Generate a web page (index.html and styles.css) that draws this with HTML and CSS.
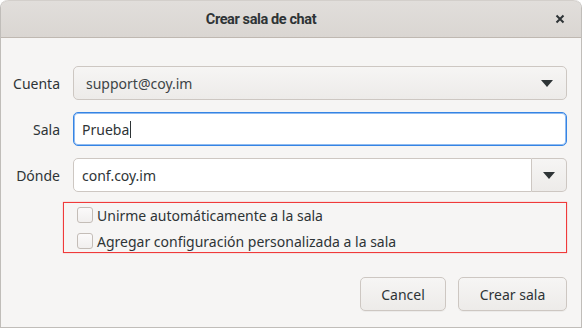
FILE: index.html
```html
<!DOCTYPE html>
<html lang="es">

<head>
    <meta charset="utf-8" />
    <title>Crear sala de chat</title>
    <link rel="stylesheet" href="styles.css">
</head>

<body>
    <div class="window">
        <div class="titlebar">
            <h1>Crear sala de chat</h1>
            <span class="closeButton">
                <svg width="10" height="10" viewBox="0 0 10 10">
                    <path d="M1.5 1.5 L8.5 8.5 M8.5 1.5 L1.5 8.5" stroke="#2e3436" stroke-width="2" />
                </svg>
            </span>
        </div>
        <div class="content">
            <!-- Champs du formulaire -->
            <div class="formGrid">
                <label>Cuenta</label>
                <div class="combo">
                    <span>support@coy.im</span>
                    <svg class="arrow" width="12" height="7" viewBox="0 0 12 7">
                        <polygon points="0,0 12,0 6,7" fill="#2e3436" />
                    </svg>
                </div>
                <label>Sala</label>
                <div class="entry focused">
                    <span>Prueba</span><span class="cursor"></span>
                </div>
                <label>Dónde</label>
                <div class="entryCombo">
                    <div class="entry">
                        <span>conf.coy.im</span>
                    </div>
                    <div class="dropButton">
                        <svg class="arrow" width="12" height="7" viewBox="0 0 12 7">
                            <polygon points="0,0 12,0 6,7" fill="#2e3436" />
                        </svg>
                    </div>
                </div>
            </div>
            <!-- Options -->
            <div class="options">
                <div class="checkRow">
                    <span class="checkBox"></span>
                    <span>Unirme automáticamente a la sala</span>
                </div>
                <div class="checkRow">
                    <span class="checkBox"></span>
                    <span>Agregar configuración personalizada a la sala</span>
                </div>
            </div>
            <div class="actions">
                <button class="cancelButton">Cancel</button>
                <button class="createButton">Crear sala</button>
            </div>
        </div>
    </div>
</body>

</html>
```

FILE: styles.css
```css
* {
    box-sizing: border-box;
}

html,
body {
    margin: 0;
    padding: 0;
}

body {
    font-family: "Noto Sans", "Open Sans", sans-serif;
    font-size: 14px;
    color: #2e3436;
    background: #ffffff;
}

.window {
    width: 582px;
    height: 328px;
    border: 1px solid #c0bdb9;
    border-top: none;
    border-radius: 8px 8px 0 0;
    background-color: #f6f5f4;
    overflow: hidden;
    display: flex;
    flex-direction: column;
}

.titlebar {
    height: 38px;
    flex-shrink: 0;
    display: flex;
    align-items: center;
    justify-content: center;
    position: relative;
    background: linear-gradient(#e1dedb, #dad6d2);
    border-top: 1px solid #d3cfcb;
    border-radius: 8px 8px 0 0;
    border-bottom: 1px solid #bfb8b1;
}

.titlebar h1 {
    margin: 0;
    padding-right: 60px;
    font-family: Roboto, "Noto Sans", sans-serif;
    font-size: 14.5px;
    font-weight: bold;
    letter-spacing: -0.4px;
    color: #2e3436;
}

.closeButton {
    position: absolute;
    right: 16px;
    top: 13px;
    width: 10px;
    height: 10px;
    display: flex;
}

.content {
    flex: 1;
    padding: 28px 14px 0 0;
    display: flex;
    flex-direction: column;
}

.formGrid {
    display: grid;
    grid-template-columns: 59px 1fr;
    grid-auto-rows: 34px;
    column-gap: 13px;
    row-gap: 12px;
}

.formGrid label {
    text-align: right;
    align-self: center;
}

.combo {
    display: flex;
    align-items: center;
    justify-content: space-between;
    padding: 0 13px 0 12px;
    border: 1px solid #cdc7c2;
    border-radius: 5px;
    background: linear-gradient(#f6f5f4, #edebe9);
    color: #3d4446;
}

.entry {
    display: flex;
    align-items: center;
    padding: 0 8px;
    border: 1px solid #cdc7c2;
    border-radius: 5px;
    background-color: #ffffff;
}

.entry.focused {
    border-color: #3584e4;
    box-shadow: inset 0 0 0 1px rgba(53, 132, 228, 0.55);
}

.cursor {
    display: inline-block;
    width: 1px;
    height: 17px;
    margin-left: 1px;
    background-color: #2e3436;
}

.entryCombo {
    display: flex;
}

.entryCombo .entry {
    flex: 1;
    border-radius: 5px 0 0 5px;
}

.dropButton {
    width: 35px;
    display: flex;
    align-items: center;
    justify-content: center;
    border: 1px solid #cdc7c2;
    border-left: none;
    border-radius: 0 5px 5px 0;
    background: linear-gradient(#f6f5f4, #edebe9);
}

.options {
    margin: 10px 0 0 62px;
    height: 51px;
    padding: 4px 0 0 13px;
    border: 1px solid #f03a3a;
    box-shadow: 0 0 1px rgba(240, 58, 58, 0.6);
    display: flex;
    flex-direction: column;
    gap: 10px;
}

.checkRow {
    display: flex;
    align-items: center;
    gap: 4px;
    height: 16px;
}

.checkBox {
    width: 16px;
    height: 16px;
    border: 1px solid #c4bdb7;
    border-radius: 3px;
    background: linear-gradient(#fbfafa, #f1efee);
}

.actions {
    margin-top: 24px;
    display: flex;
    justify-content: flex-end;
    gap: 12px;
}

.actions button {
    height: 34px;
    font-family: inherit;
    font-size: 14px;
    color: #2e3436;
    border: 1px solid #cdc7c2;
    border-radius: 5px;
    background: linear-gradient(#f6f5f4, #edebe9);
    box-shadow: 0 1px 0 rgba(0, 0, 0, 0.04);
}

.cancelButton {
    width: 86px;
}

.createButton {
    width: 109px;
}
```
